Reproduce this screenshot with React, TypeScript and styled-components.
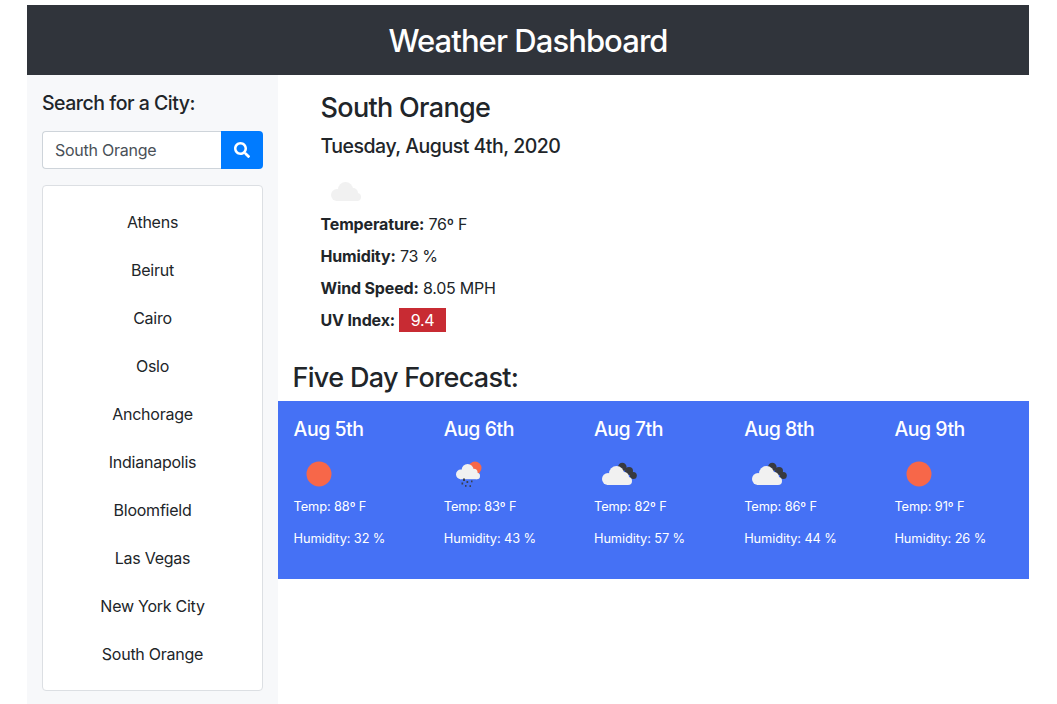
import React from 'react';
import styled, { createGlobalStyle } from 'styled-components';
import { FaSearch } from 'react-icons/fa';

const GlobalStyle = createGlobalStyle`
  * { box-sizing: border-box; }
  body {
    margin: 0;
    background: #fff;
    color: #212529;
    font-family: Inter, "Liberation Sans", sans-serif;
    font-size: 16px;
    letter-spacing: -0.25px;
  }
`;

/* ── Page shell ── */
const Page = styled.div`
  width: 1002px;
  margin: 0 0 0 27px;
  padding-top: 5px;
`;

const Banner = styled.header`
  height: 70px;
  display: flex;
  align-items: center;
  justify-content: center;
  padding-top: 1px;
  background: #30343b;
  color: #fff;
`;

const BannerTitle = styled.h1`
  margin: 0;
  font-size: 31px;
  font-weight: 500;
  letter-spacing: -0.03em;
`;

const Columns = styled.div`
  display: flex;
  align-items: flex-start;
`;

/* ── Sidebar ── */
const Sidebar = styled.aside`
  width: 251px;
  flex-shrink: 0;
  padding: 16px 15px 13px;
  background: #f7f8fa;
`;

const SidebarTitle = styled.h2`
  margin: 0 0 16px;
  font-size: 19.5px;
  line-height: 24px;
  font-weight: 500;
  letter-spacing: -0.025em;
`;

const SearchGroup = styled.div`
  display: flex;
  height: 38px;
`;

const SearchInput = styled.input`
  flex: 1;
  min-width: 0;
  padding: 0 12px;
  border: 1px solid #ced4da;
  border-right: 0;
  border-radius: 4px 0 0 4px;
  background: #fff;
  color: #495057;
  font: inherit;
  letter-spacing: inherit;
`;

const SearchButton = styled.button`
  width: 42px;
  display: flex;
  align-items: center;
  justify-content: center;
  border: 0;
  border-radius: 0 4px 4px 0;
  background: #007bff;
  color: #fff;
  font-size: 16px;
`;

const CityList = styled.ul`
  list-style: none;
  margin: 16px 0 0;
  padding: 12px 0;
  border: 1px solid #dcdfe3;
  border-radius: 4px;
  background: #fff;
`;

const CityItem = styled.li`
  height: 48px;
  display: flex;
  align-items: center;
  justify-content: center;
`;

/* ── Current conditions ── */
const Main = styled.main`
  flex: 1;
  min-width: 0;
`;

const Current = styled.section`
  padding: 16px 0 0 42.5px;
`;

const CityName = styled.h2`
  margin: 0;
  font-size: 27px;
  line-height: 34px;
  font-weight: 500;
  letter-spacing: -0.025em;
`;

const DateLine = styled.h3`
  margin: 9px 0 0;
  font-size: 19.5px;
  line-height: 24px;
  font-weight: 500;
  letter-spacing: -0.025em;
`;

const CurrentIcon = styled.div`
  height: 50px;
`;

const StatRow = styled.p`
  margin: 0;
  height: 32px;
  display: flex;
  align-items: center;
  white-space: pre;
  strong { font-weight: 700; letter-spacing: -0.15px; }
`;

const UvBadge = styled.span`
  width: 47px;
  height: 24px;
  margin-left: 4px;
  display: flex;
  align-items: center;
  justify-content: center;
  background: #c82b33;
  color: #fff;
`;

/* ── Forecast ── */
const ForecastTitle = styled.h2`
  margin: 27px 0 0 14.5px;
  font-size: 27px;
  line-height: 30px;
  font-weight: 500;
  letter-spacing: -0.025em;
`;

const ForecastPanel = styled.div`
  height: 178px;
  margin-top: 8px;
  display: grid;
  grid-template-columns: repeat(5, 1fr);
  background: #4571f5;
  color: #fff;
`;

const DayCard = styled.div`
  padding: 16px 0 0 15.6px;
`;

const DayName = styled.h3`
  margin: 0;
  font-size: 19.5px;
  line-height: 24px;
  font-weight: 500;
  letter-spacing: -0.025em;
`;

const DayIcon = styled.div`
  height: 41px;
  margin-top: 8px;
`;

const DayStat = styled.p`
  margin: 0;
  height: 32px;
  display: flex;
  align-items: center;
  font-size: 12.8px;
  letter-spacing: -0.1px;
`;

/* ── Weather icons, drawn on the box the owm pngs would fill ── */
const WeatherSvg = styled.svg`
  display: block;
`;

// 30×19 cloud, placed with a transform
const CloudShape = ({ at, fill = '#f1f1f1' }: { at: string; fill?: string }) => (
  <g transform={at} fill={fill}>
    <circle cx="6" cy="13" r="6" />
    <circle cx="14.500" cy="7.500" r="7.500" />
    <circle cx="22" cy="11" r="5" />
    <circle cx="26" cy="15" r="4" />
    <rect x="5" y="10" width="21" height="9" />
  </g>
);

const IconBox = ({ children }: { children: React.ReactNode }) => (
  <WeatherSvg width="50" height="41" viewBox="0 0 50 41">{children}</WeatherSvg>
);

const Sun = () => (
  <IconBox>
    <circle cx="25" cy="25" r="12.500" fill="#f76749" />
  </IconBox>
);

const RainCloud = () => (
  <IconBox>
    <circle cx="31" cy="19" r="6.500" fill="#f76749" />
    <CloudShape at="translate(12 15) scale(0.8)" />
    <g fill="#3a3f4d">
      <rect x="19" y="29.500" width="2" height="2.500" />
      <rect x="17.500" y="33.500" width="1.700" height="2" />
      <rect x="22.500" y="32" width="1.700" height="2" />
      <rect x="27" y="31.500" width="1.500" height="1.800" />
      <rect x="21" y="36" width="1.500" height="1.800" />
      <rect x="25.500" y="36.200" width="1.500" height="1.800" />
    </g>
  </IconBox>
);

const DarkCloud = () => (
  <IconBox>
    <g fill="#383a40">
      <circle cx="28.300" cy="18" r="4.300" />
      <circle cx="35" cy="22" r="4" />
      <circle cx="39.300" cy="26.500" r="3.500" />
    </g>
    <CloudShape at="translate(8 17)" />
  </IconBox>
);

const CurrentCloud = () => (
  <WeatherSvg width="50" height="50" viewBox="0 0 50 50">
    <CloudShape at="translate(10 24)" />
  </WeatherSvg>
);

type Day = { date: string; temp: number; humidity: number; icon: React.ReactNode };

const cities = ['Athens', 'Beirut', 'Cairo', 'Oslo', 'Anchorage', 'Indianapolis', 'Bloomfield', 'Las Vegas', 'New York City', 'South Orange'];

const days: Day[] = [
  { date: 'Aug 5th', temp: 88, humidity: 32, icon: <Sun /> },
  { date: 'Aug 6th', temp: 83, humidity: 43, icon: <RainCloud /> },
  { date: 'Aug 7th', temp: 82, humidity: 57, icon: <DarkCloud /> },
  { date: 'Aug 8th', temp: 86, humidity: 44, icon: <DarkCloud /> },
  { date: 'Aug 9th', temp: 91, humidity: 26, icon: <Sun /> },
];

export default function App() {
  return (
    <Page>
      <GlobalStyle />
      <Banner>
        <BannerTitle>Weather Dashboard</BannerTitle>
      </Banner>
      <Columns>
        <Sidebar>
          <SidebarTitle>Search for a City:</SidebarTitle>
          <SearchGroup>
            <SearchInput defaultValue="South Orange" />
            <SearchButton aria-label="Search"><FaSearch /></SearchButton>
          </SearchGroup>
          <CityList>
            {cities.map((city) => <CityItem key={city}>{city}</CityItem>)}
          </CityList>
        </Sidebar>
        <Main>
          <Current>
            <CityName>South Orange</CityName>
            <DateLine>Tuesday, August 4th, 2020</DateLine>
            <CurrentIcon><CurrentCloud /></CurrentIcon>
            <StatRow><strong>Temperature:</strong> 76º F</StatRow>
            <StatRow><strong>Humidity:</strong> 73 %</StatRow>
            <StatRow><strong>Wind Speed:</strong> 8.05 MPH</StatRow>
            <StatRow><strong>UV Index:</strong><UvBadge>9.4</UvBadge></StatRow>
          </Current>
          <ForecastTitle>Five Day Forecast:</ForecastTitle>
          <ForecastPanel>
            {days.map((day) => (
              <DayCard key={day.date}>
                <DayName>{day.date}</DayName>
                <DayIcon>{day.icon}</DayIcon>
                <DayStat>Temp: {day.temp}º F</DayStat>
                <DayStat>Humidity: {day.humidity} %</DayStat>
              </DayCard>
            ))}
          </ForecastPanel>
        </Main>
      </Columns>
    </Page>
  );
}
